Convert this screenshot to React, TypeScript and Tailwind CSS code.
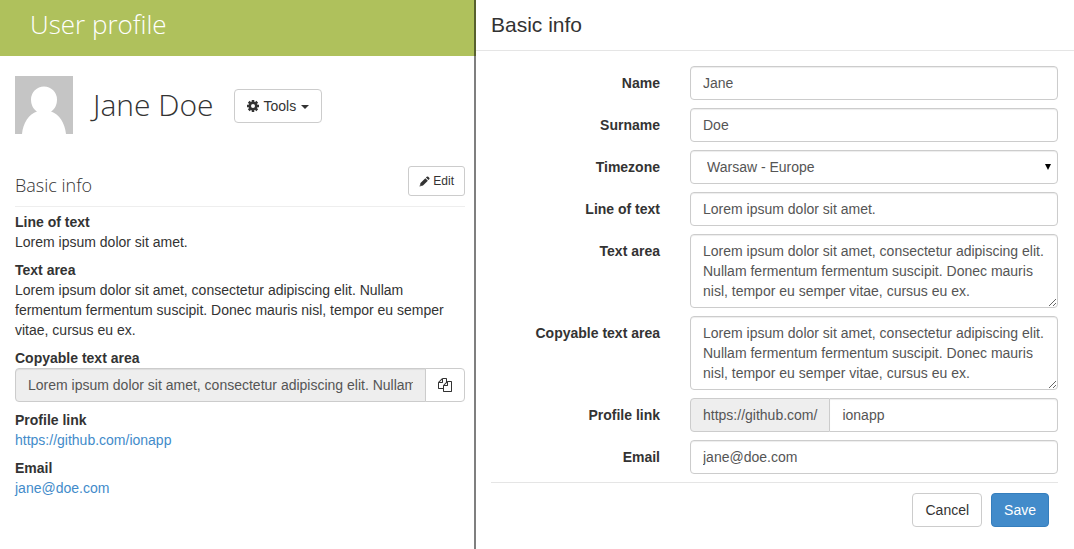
import type { ReactNode } from 'react';

const FILES =
  'M1696 384q40 0 68 28t28 68v1216q0 40-28 68t-68 28h-960q-40 0-68-28t-28-68v-288h-544q-40 0-68-28t-28-68v-672q0-40 20-88t48-76l408-408q28-28 76-48t88-20h416q40 0 68 28t28 68v328q68-40 128-40h416zm-544 213l-299 299h299v-299zm-640-384l-299 299h299v-299zm196 647l316-316v-416h-384v416q0 40-28 68t-68 28h-416v640h512v-256q0-40 20-88t48-76zm956 804v-1152h-384v416q0 40-28 68t-68 28h-416v640h896z';

const LOREM =
  'Lorem ipsum dolor sit amet, consectetur adipiscing elit. Nullam fermentum fermentum suscipit. Donec mauris nisl, tempor eu semper vitae, cursus eu ex.';

const field =
  'block w-full min-w-0 rounded border border-[#ccc] bg-white px-3 py-1.5 text-[#555] shadow-[inset_0_1px_1px_rgba(0,0,0,0.075)]';
const button = 'flex items-center rounded border border-[#ccc] bg-white px-3 py-1.5';

function Detail({ title, children }: { title: string; children: ReactNode }) {
  return (
    <div>
      <dt className="font-bold">{title}</dt>
      <dd>{children}</dd>
    </div>
  );
}

function FormRow({ id, label, children }: { id: string; label: string; children: ReactNode }) {
  return (
    <div className="grid grid-cols-[169fr_368fr] gap-x-[30px]">
      <label htmlFor={id} className="pt-[7px] text-right font-bold">
        {label}
      </label>
      <div className="min-w-0">{children}</div>
    </div>
  );
}

function CogIcon() {
  return (
    <svg viewBox="0 0 24 24" className="size-3" fill="none" stroke="currentColor" aria-hidden="true">
      <circle cx="12" cy="12" r="6.500" strokeWidth="5" />
      <path
        d="M12 0v4M12 20v4M0 12h4M20 12h4M3.500 3.500l3 3M17.500 17.500l3 3M3.500 20.500l3-3M17.500 6.500l3-3"
        strokeWidth="5"
      />
    </svg>
  );
}

function PencilIcon() {
  return (
    <svg viewBox="0 0 22 22" className="size-[11px]" fill="currentColor" aria-hidden="true">
      <path d="M15.500 1.500q1.500-1.500 3 0l2 2q1.500 1.500 0 3l-1.700 1.700-5-5zM12.700 4.300l5 5L8 19l-7 2 2-7zM3.600 17.200l-.8 2 2-.8z" fillRule="evenodd" />
    </svg>
  );
}

function Profile() {
  return (
    <section className="flex min-w-0 flex-col">
      <header className="border-r-2 border-black/50 bg-[#afc15c] px-[30px] pt-1.5 pb-3.5">
        <h1 className="font-['Open_Sans',sans-serif] text-[26px] leading-9 font-light text-white">User profile</h1>
      </header>
      <div className="grow border-r-2 border-black/50 py-5 pr-[9px] pl-[15px]">
        <div className="flex items-center">
          <svg viewBox="0 0 58 58" className="size-[58px]" role="img" aria-label="Avatar">
            <rect width="58" height="58" fill="#c5c5c5" />
            <path d="M7 58C8 47 14 38 22 35.500C18 33 16 28.500 16 23.500a13 13 0 0 1 26 0C42 28.500 40 33 36 35.500C44 38 50 47 51 58z" fill="#fff" />
          </svg>
          <h2 className="ml-5 font-['Open_Sans',sans-serif] text-[30px] leading-9 font-light">Jane Doe</h2>
          <button type="button" className={`${button} mt-0.5 ml-5 gap-[5px]`}>
            <CogIcon />
            Tools
            <svg viewBox="0 0 8 4" className="mt-0.5 h-1 w-2" fill="currentColor" aria-hidden="true">
              <path d="M0 0h8L4 4z" />
            </svg>
          </button>
        </div>

        <div className="mt-8 flex items-center justify-between border-b border-[#eee] pb-2.5">
          <h3 className="pt-2 font-['Open_Sans',sans-serif] text-[18px] leading-5 font-light">Basic info</h3>
          <button type="button" className="flex items-center gap-[3px] rounded-[3px] border border-[#ccc] px-2.5 py-[5px] text-[12px] leading-[18px]">
            <PencilIcon />
            Edit
          </button>
        </div>

        <dl className="mt-[5px] flex flex-col gap-2">
          <Detail title="Line of text">Lorem ipsum dolor sit amet.</Detail>
          <Detail title="Text area">{LOREM}</Detail>
          <Detail title="Copyable text area">
            <span className="flex">
              <input
                readOnly
                aria-label="Copyable text area"
                value={LOREM}
                className="min-w-0 grow rounded-l border border-[#ccc] bg-[#eee] px-3 py-1.5 text-[#555] shadow-[inset_0_1px_1px_rgba(0,0,0,0.075)]"
              />
              <button type="button" aria-label="Copy" className="-ml-px rounded-r border border-[#ccc] bg-white px-3">
                <svg viewBox="0 0 1792 1792" className="size-3.5" fill="currentColor" aria-hidden="true">
                  <path d={FILES} />
                </svg>
              </button>
            </span>
          </Detail>
          <Detail title="Profile link">
            <a href="https://github.com/ionapp" className="text-[#428bca]">
              https://github.com/ionapp
            </a>
          </Detail>
          <Detail title="Email">
            <a href="mailto:jane@doe.com" className="text-[#428bca]">
              jane@doe.com
            </a>
          </Detail>
        </dl>
      </div>
    </section>
  );
}

function EditForm() {
  return (
    <section className="min-w-0">
      <header className="border-b border-[#e5e5e5] px-[15px] pt-[11px] pb-[11px]">
        <h2 className="text-[21px] leading-7">Basic info</h2>
      </header>
      <form className="pt-[15px] pr-4 pl-[15px]" onSubmit={(event) => event.preventDefault()}>
        <div className="flex flex-col gap-2">
          <FormRow id="name" label="Name">
            <input id="name" defaultValue="Jane" className={field} />
          </FormRow>
          <FormRow id="surname" label="Surname">
            <input id="surname" defaultValue="Doe" className={field} />
          </FormRow>
          <FormRow id="timezone" label="Timezone">
            <span className="relative block">
              <select id="timezone" className={`${field} appearance-none pl-4`}>
                <option>Warsaw - Europe</option>
              </select>
              <svg viewBox="0 0 6 6" className="pointer-events-none absolute top-3.5 right-[7px] size-1.5" aria-hidden="true">
                <path d="M0 0h6L3 6z" />
              </svg>
            </span>
          </FormRow>
          <FormRow id="line" label="Line of text">
            <input id="line" defaultValue="Lorem ipsum dolor sit amet." className={field} />
          </FormRow>
          <FormRow id="area" label="Text area">
            <textarea id="area" rows={3} defaultValue={LOREM} className={field} />
          </FormRow>
          <FormRow id="copyable" label="Copyable text area">
            <textarea id="copyable" rows={3} defaultValue={LOREM} className={field} />
          </FormRow>
          <FormRow id="link" label="Profile link">
            <div className="flex">
              <span className="rounded-l border border-[#ccc] bg-[#eee] px-3 py-1.5 text-[#555]">https://github.com/</span>
              <input id="link" defaultValue="ionapp" className={`${field} rounded-l-none border-l-0`} />
            </div>
          </FormRow>
          <FormRow id="email" label="Email">
            <input id="email" type="email" defaultValue="jane@doe.com" className={field} />
          </FormRow>
        </div>
        <div className="mt-2 flex justify-end gap-[9px] border-t border-[#e5e5e5] pt-2.5 pr-[9px]">
          <button type="button" className={button}>
            Cancel
          </button>
          <button type="submit" className="rounded border border-[#357ebd] bg-[#428bca] px-3 py-1.5 text-white">
            Save
          </button>
        </div>
      </form>
    </section>
  );
}

export default function App() {
  return (
    <main className="grid min-h-screen grid-cols-[476fr_598fr] bg-white font-['Liberation_Sans',Arial,sans-serif] text-[14px] leading-5 text-[#333]">
      <Profile />
      <EditForm />
    </main>
  );
}
